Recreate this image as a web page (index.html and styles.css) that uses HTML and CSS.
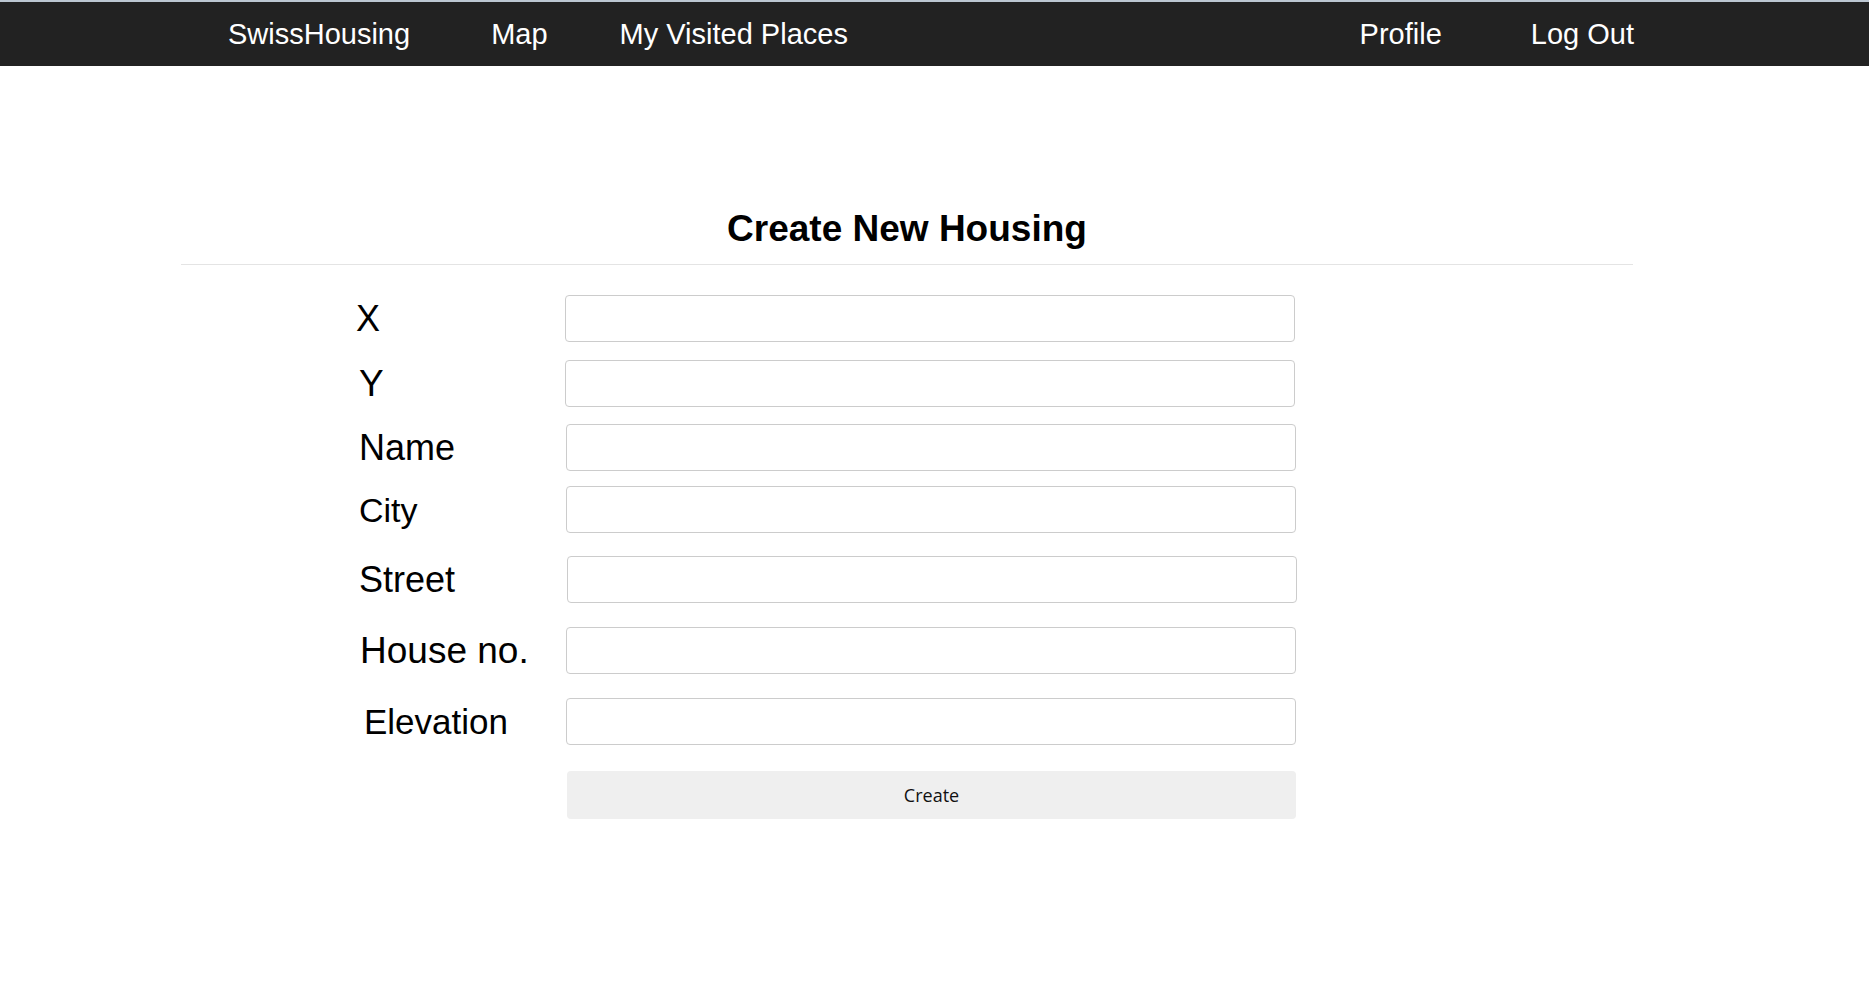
FILE: index.html
```html
<!DOCTYPE html>
<html lang="en">
<head>
<meta charset="utf-8">
<title>SwissHousing - Create New Housing</title>
<link rel="stylesheet" href="styles.css">
</head>
<body>
<div class="topline"></div>
<nav class="navbar">
  <div class="nav-inner">
    <div class="nav-left">
      <a class="brand" href="#">SwissHousing</a>
      <a class="nav-link link-map" href="#">Map</a>
      <a class="nav-link link-visited" href="#">My Visited Places</a>
    </div>
    <div class="nav-right">
      <a class="nav-link" href="#">Profile</a>
      <a class="nav-link link-logout" href="#">Log Out</a>
    </div>
  </div>
</nav>
<main class="container">
  <h1 class="title">Create New Housing</h1>
  <hr class="divider">
  <form class="housing-form">
    <div class="row row-x">
      <label class="lbl lbl-x" for="x">X</label>
      <input class="field" id="x" type="text">
    </div>
    <div class="row row-y">
      <label class="lbl lbl-y" for="y">Y</label>
      <input class="field" id="y" type="text">
    </div>
    <div class="row row-name">
      <label class="lbl lbl-name" for="name">Name</label>
      <input class="field field-name" id="name" type="text">
    </div>
    <div class="row row-city">
      <label class="lbl lbl-city" for="city">City</label>
      <input class="field field-name" id="city" type="text">
    </div>
    <div class="row row-street">
      <label class="lbl lbl-street" for="street">Street</label>
      <input class="field field-street" id="street" type="text">
    </div>
    <div class="row row-house">
      <label class="lbl lbl-house" for="house">House no.</label>
      <input class="field field-name" id="house" type="text">
    </div>
    <div class="row row-elev">
      <label class="lbl lbl-elev" for="elev">Elevation</label>
      <input class="field field-name" id="elev" type="text">
    </div>
    <div class="row row-btn">
      <button class="btn-create" type="button">Create</button>
    </div>
  </form>
</main>
</body>
</html>
```

FILE: styles.css
```css
* {
  box-sizing: border-box;
}

html, body {
  margin: 0;
  padding: 0;
  background: #ffffff;
  font-family: "Liberation Sans", Arial, sans-serif;
  color: #000000;
}

.topline {
  height: 2px;
  background: #bcc7d2;
}

.navbar {
  height: 64px;
  background: #222222;
}

.nav-inner {
  margin-left: 181px;
  width: 1453px;
  height: 100%;
  display: flex;
  align-items: center;
  justify-content: space-between;
}

.nav-left,
.nav-right {
  display: flex;
  align-items: center;
}

.navbar a {
  color: #ffffff;
  text-decoration: none;
  white-space: nowrap;
}

.brand {
  font-size: 29px;
  margin-left: 47px;
}

.nav-link {
  font-size: 29px;
}

.link-map {
  margin-left: 81px;
}

.link-visited {
  margin-left: 72px;
}

.link-logout {
  margin-left: 89px;
}

.container {
  margin-left: 181px;
  width: 1452px;
  padding-top: 142px;
}

.title {
  margin: 0;
  font-size: 37px;
  line-height: 42px;
  font-weight: bold;
  text-align: center;
}

.divider {
  margin: 14px 0 0 0;
  border: 0;
  height: 1px;
  background: #e4e4e4;
}

.housing-form {
  margin-left: 175px;
  padding-top: 30px;
}

.row {
  display: flex;
  align-items: center;
}

.lbl {
  width: 209px;
  flex: none;
  font-size: 36px;
  line-height: 42px;
}

.lbl-x { padding-left: 0; }
.lbl-y { padding-left: 3px; font-size: 37px; }
.lbl-name { padding-left: 3px; }
.lbl-city { padding-left: 3px; font-size: 34px; }
.lbl-street { padding-left: 3px; }
.lbl-house { padding-left: 4px; font-size: 37px; }
.lbl-elev { padding-left: 8px; font-size: 35px; }

.field {
  width: 730px;
  height: 47px;
  border: 1px solid #cccccc;
  border-radius: 4px;
  background: #ffffff;
  font-size: 18px;
  padding: 0 10px;
  margin: 0;
  outline: none;
}

.field-name {
  margin-left: 1px;
}

.field-street {
  margin-left: 2px;
}

.row-y { margin-top: 18px; }
.row-name { margin-top: 17px; }
.row-city { margin-top: 15px; }
.row-street { margin-top: 23px; }
.row-house { margin-top: 24px; }
.row-elev { margin-top: 24px; }
.row-btn {
  margin-top: 26px;
  padding-left: 211px;
}

.btn-create {
  width: 729px;
  height: 48px;
  border: none;
  border-radius: 4px;
  background: #efefef;
  color: #111111;
  font-family: "Open Sans", "Noto Sans", sans-serif;
  font-size: 18px;
  cursor: pointer;
}
```
